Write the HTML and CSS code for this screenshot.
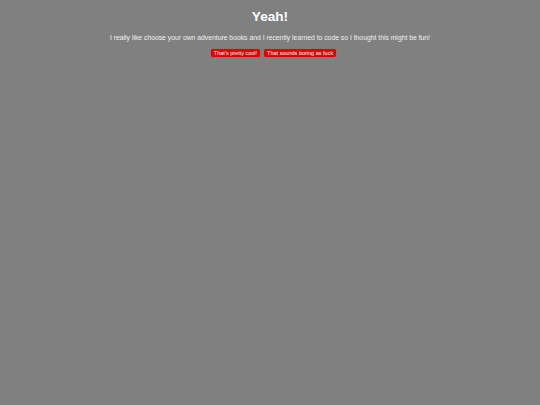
FILE: index.html
```html
<!DOCTYPE html>
<html>
<head>
<meta charset="utf-8">
<link rel="stylesheet" href="styles.css">
</head>
<body>
<div class="page">
  <h1 class="title">Yeah!</h1>
  <p class="intro">I really like choose your own adventure books and I recently learned to code so I thought this might be fun!</p>
  <div class="choices">
    <button class="choice">That's pretty cool!</button>
    <button class="choice">That sounds boring as fuck</button>
  </div>
</div>
</body>
</html>
```
FILE: styles.css
```css
html, body {
  margin: 0;
  padding: 0;
  background: #808080;
  height: 100%;
}
body {
  font-family: "Liberation Sans", Arial, sans-serif;
  color: #ffffff;
}
.page {
  display: flex;
  flex-direction: column;
  align-items: center;
  padding-top: 9px;
}
.title {
  margin: 0;
  font-size: 13.6px;
  font-weight: bold;
  line-height: 16px;
}
.intro {
  margin: 9px 0 0 0;
  font-size: 6.8px;
  line-height: 8px;
  color: #f0f0f0;
}
.choices {
  display: flex;
  gap: 4px;
  margin-top: 7px;
  padding-left: 7px;
}
.choice {
  font-family: "Liberation Sans", Arial, sans-serif;
  font-size: 5.5px;
  line-height: 6px;
  color: #ffffff;
  background: #e00000;
  border: none;
  border-radius: 2px;
  padding: 1px 3px;
  box-shadow: 0 0 1px #ff2020;
}
```
